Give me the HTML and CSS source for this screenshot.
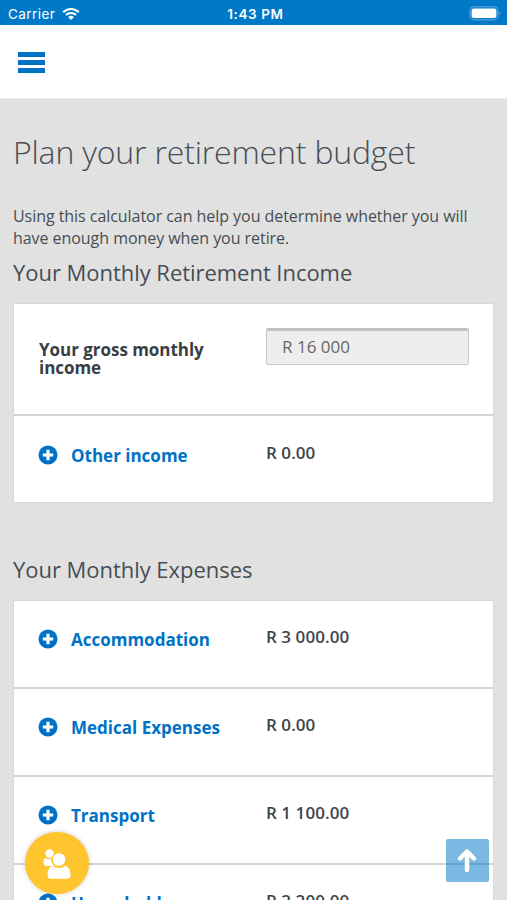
FILE: index.html
```html
<!DOCTYPE html>
<html lang="en">
<head>
<meta charset="utf-8">
<title>Plan your retirement budget</title>
<link rel="stylesheet" href="styles.css">
</head>
<body>
<svg class="defs" width="0" height="0" aria-hidden="true">
  <symbol id="plus" viewBox="0 0 20 20"><circle cx="10" cy="10" r="9.5" fill="#0072c6"/><path d="M10 4.8v10.4M4.8 10h10.4" stroke="#fff" stroke-width="3.2"/></symbol>
</svg>
<div class="status">
  <div class="carrier"><span class="carrier-name">Carrier</span>
    <svg width="18" height="14" viewBox="0 0 18 14" fill="none" stroke="#fff" stroke-width="2.1"><path d="M1.2 5.2a11 11 0 0 1 15.6 0"/><path d="M4 8.1a7 7 0 0 1 10 0"/><path d="M6.1 10.1a4.1 4.1 0 0 1 5.8 0L9 13z" fill="#fff" stroke="none"/></svg>
  </div>
  <span class="time">1:43 PM</span>
  <svg class="battery" width="33" height="15" viewBox="0 0 33 15"><rect x="2" y=".8" width="28" height="13" rx="3.8" fill="none" stroke="#66aee0"/><rect x="3.6" y="2.5" width="24.8" height="9.6" rx="2" fill="#fff"/><path d="M31.5 5.3q2 2 0 4z" fill="#66aee0"/></svg>
</div>
<header class="topbar"><button class="menu" aria-label="Menu"><i></i><i></i><i></i></button></header>
<main class="page">
  <h1>Plan your retirement budget</h1>
  <p class="intro">Using this calculator can help you determine whether you will<br>have enough money when you retire.</p>
  <h2 class="income-title">Your Monthly Retirement Income</h2>
  <section class="card">
    <div class="row gross"><div class="label">Your gross monthly<br>income</div><input class="field" value="R 16 000" aria-label="Gross monthly income" readonly></div>
    <div class="row"><a class="toggle"><svg class="plus"><use href="#plus"/></svg>Other income</a><span class="amount">R 0.00</span></div>
  </section>
  <h2 class="expense-title">Your Monthly Expenses</h2>
  <section class="card expenses">
    <div class="row"><a class="toggle"><svg class="plus"><use href="#plus"/></svg>Accommodation</a><span class="amount">R 3 000.00</span></div>
    <div class="row"><a class="toggle"><svg class="plus"><use href="#plus"/></svg>Medical Expenses</a><span class="amount">R 0.00</span></div>
    <div class="row"><a class="toggle"><svg class="plus"><use href="#plus"/></svg>Transport</a><span class="amount">R 1 100.00</span></div>
    <div class="row"><a class="toggle"><svg class="plus"><use href="#plus"/></svg>Household</a><span class="amount">R 2 200.00</span></div>
  </section>
</main>
<button class="people" aria-label="Contact us"><svg width="64" height="62" viewBox="0 0 64 62" fill="#fff"><circle cx="24.5" cy="21.5" r="4.2"/><path d="M20 26q3.500 2 6 .500 0 5 3.500 7.500H21.500q-3-.2-3-4 0-3 1.500-4z"/><circle cx="34" cy="27.500" r="6.900" stroke="#ffc52f" stroke-width="1.200"/><path d="M27.500 33.800q6.500 4.500 13 0 5 2 5 9.500 0 3.500-3.500 3.500H26q-3.500 0-3.500-3.500 0-7.500 5-9.500z"/></svg></button>
<button class="top" aria-label="Back to top"><svg width="43" height="43" viewBox="0 0 43 43" fill="none" stroke="#fff" stroke-width="4.500" stroke-linecap="round" stroke-linejoin="round"><path d="M21 31V13M14 19.500l7-7 7 7"/></svg></button>
</body>
</html>
```
FILE: styles.css
```css
* { box-sizing: border-box; }
html { height: 100%; overflow: hidden; }
body { margin: 0; height: 900px; overflow: hidden; position: relative; background: #e1e1e1; color: #464d53; font-family: "Open Sans", sans-serif; }
button { border: 0; padding: 0; }
.defs { position: absolute; }
.status { height: 25px; background: #0078c8; color: #fff; display: grid; grid-template-columns: 1fr auto 1fr; align-items: center; padding: 2px 6px 0 8px; font: 13px/20px Inter, sans-serif; }
.carrier { display: flex; align-items: center; gap: 6px; height: 20px; }
.carrier-name { width: 48px; font-size: 13.5px; letter-spacing: .45px; }
.time { padding-left: 2px; font-weight: 600; font-size: 13.5px; letter-spacing: .6px; }
.battery { justify-self: end; }
.topbar { height: 74px; background: #fff; border-bottom: 1px solid #ececec; padding: 27px 18px; }
.menu { width: 27px; display: grid; gap: 3px; background: none; }
.menu i { height: 5px; background: #0072c6; }
.page { height: 801px; overflow: hidden; padding: 0 13px; }
h1, h2, p { margin: 0; }
h1 { padding-top: 30px; font-weight: 300; font-size: 32px; line-height: 46px; letter-spacing: -.17px; white-space: nowrap; }
.intro { margin-top: 30px; font-size: 16px; line-height: 22px; letter-spacing: -.05px; white-space: nowrap; }
h2 { font-weight: 400; font-size: 22px; line-height: 30px; letter-spacing: -.04px; white-space: nowrap; }
.income-title { margin-top: 8px; }
.expense-title { margin-top: 51px; }
.card { margin-top: 16px; border: 1px solid #d8d8d8; background: #fff; }
.row { height: 88px; padding: 0 24px 0 24px; display: grid; grid-template-columns: 228px 1fr; align-items: start; border-bottom: 2px solid #d4d4d4; }
.row:last-child { border-bottom: 0; height: 86px; }
.row.gross { height: 112px; }
.label { padding: 37px 0 0 1px; font-size: 17px; line-height: 18px; letter-spacing: -.04px; font-weight: 700; color: #383e44; }
.field { margin-top: 24px; width: 203px; height: 37px; border: 1px solid #c9c9c9; border-top: 3px solid #c2c2c2; border-radius: 2px; background: #eee; padding: 0 15px 3px; color: #666; font: 17px "Open Sans", sans-serif; }
.toggle { display: flex; align-items: center; gap: 13px; margin-top: 27px; height: 24px; font-size: 17px; font-weight: 700; color: #0072c6; }
.plus { width: 20px; height: 20px; }
.amount { margin-top: 25px; font-size: 17px; font-weight: 600; line-height: 24px; letter-spacing: .05px; color: #3d454c; }
.expenses .toggle { margin-top: 26px; }
.expenses .amount { margin-top: 24px; }
.people { position: absolute; left: 25px; top: 832px; width: 64px; height: 62px; border-radius: 50%; background: #ffc52f; box-shadow: 0 0 5px #0003; }
.top { position: absolute; left: 446px; top: 839px; width: 43px; height: 43px; border-radius: 2px; background: #0078c885; }
.people svg, .top svg { display: block; }
```
